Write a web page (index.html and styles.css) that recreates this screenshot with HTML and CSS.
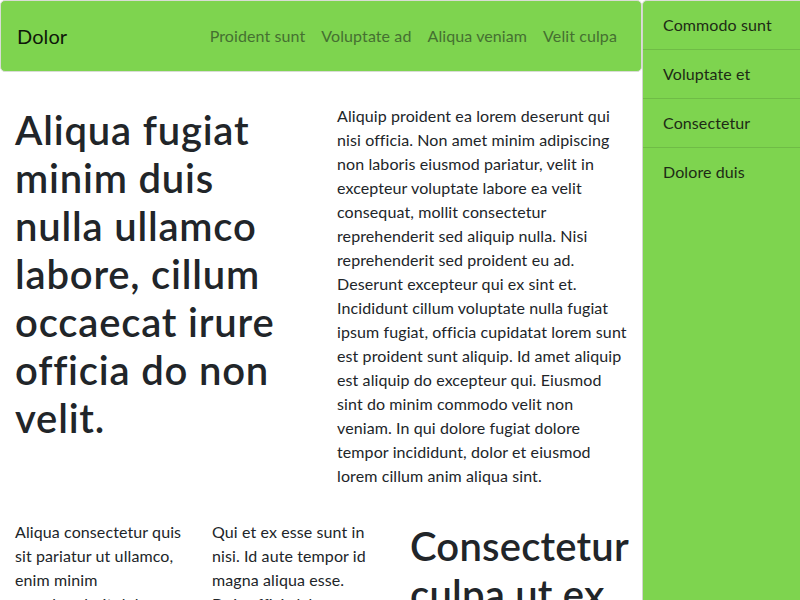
FILE: index.html
```html
<!DOCTYPE html>
<html lang="la">
<head>
<meta charset="utf-8">
<title>Dolor</title>
<link rel="stylesheet" href="styles.css">
</head>
<body>
<div class="page">
  <div class="main">
    <nav class="navbar">
      <a class="brand" href="#">Dolor</a>
      <ul class="nav">
        <li><a href="#">Proident sunt</a></li>
        <li><a href="#">Voluptate ad</a></li>
        <li><a href="#">Aliqua veniam</a></li>
        <li><a href="#">Velit culpa</a></li>
      </ul>
    </nav>
    <div class="row top">
      <div class="col">
        <h1>Aliqua fugiat minim duis nulla ullamco labore, cillum occaecat irure officia do non velit.</h1>
      </div>
      <div class="col">
        <p>Aliquip proident ea lorem deserunt qui nisi officia. Non amet minim adipiscing non laboris eiusmod pariatur, velit in excepteur voluptate labore ea velit consequat, mollit consectetur reprehenderit sed aliquip nulla. Nisi reprehenderit sed proident eu ad. Deserunt excepteur qui ex sint et. Incididunt cillum voluptate nulla fugiat ipsum fugiat, officia cupidatat lorem sunt est proident sunt aliquip. Id amet aliquip est aliquip do excepteur qui. Eiusmod sint do minim commodo velit non veniam. In qui dolore fugiat dolore tempor incididunt, dolor et eiusmod lorem cillum anim aliqua sint.</p>
      </div>
    </div>
    <div class="row bottom">
      <div class="col">
        <p>Aliqua consectetur quis sit pariatur ut ullamco, enim minim reprehenderit dolor sint in culpa.</p>
      </div>
      <div class="col">
        <p>Qui et ex esse sunt in nisi. Id aute tempor id magna aliqua esse. Duis officia labore nulla.</p>
      </div>
      <div class="col">
        <h1>Consectetur culpa ut ex dolore.</h1>
      </div>
    </div>
  </div>
  <aside class="sidebar">
    <ul class="list">
      <li><a href="#">Commodo sunt</a></li>
      <li><a href="#">Voluptate et</a></li>
      <li><a href="#">Consectetur</a></li>
      <li><a href="#">Dolore duis</a></li>
    </ul>
  </aside>
</div>
</body>
</html>
```
FILE: styles.css
```css
* { box-sizing: border-box; }
html, body { margin: 0; height: 100%; overflow: hidden; }
body {
  font-family: Lato, "Open Sans", sans-serif;
  font-size: 16px;
  line-height: 24px;
  letter-spacing: 0.1px;
  color: #212529;
  background: #fff;
}
a { text-decoration: none; color: inherit; }
ul { list-style: none; margin: 0; padding: 0; }

.page {
  display: flex;
  height: 100%;
}
.main {
  flex: 0 0 642px;
  width: 642px;
}
.navbar {
  display: flex;
  align-items: center;
  justify-content: space-between;
  height: 72px;
  padding: 0 16px;
  background: #7ed44f;
  border: 1px solid #d9dcd6;
  border-radius: 5px;
}
.brand {
  font-size: 20px;
  color: #0e1709;
  line-height: 30px;
}
.nav {
  display: flex;
}
.nav a {
  display: block;
  padding: 0 8px;
  color: #457031;
  line-height: 24px;
}

.row {
  display: grid;
}
.top {
  grid-template-columns: 322px 1fr;
  padding-top: 32px;
}
.bottom {
  grid-template-columns: 197px 198px 1fr;
  padding-top: 16px;
}
.col {
  padding: 0 15px;
  min-width: 0;
}
h1 {
  margin: 0;
  font-size: 40px;
  line-height: 48px;
  font-weight: 600;
  letter-spacing: 0.8px;
}
.top h1 { margin-top: 2px; }
.bottom h1 { margin-top: 2px; letter-spacing: 0.2px; }
p {
  margin: 0 0 16px;
}

.sidebar {
  flex: 1;
  background: #7ed44f;
  border-left: 1px solid #d2d5cf;
  border-top: 1px solid #d9dcd6;
  border-top-left-radius: 5px;
}
.list li {
  border-bottom: 1px solid #6fbc46;
}
.list li:last-child {
  border-bottom: 0;
}
.list a {
  display: block;
  padding: 12px 20px;
  color: #1d2b15;
  line-height: 24px;
}
```
